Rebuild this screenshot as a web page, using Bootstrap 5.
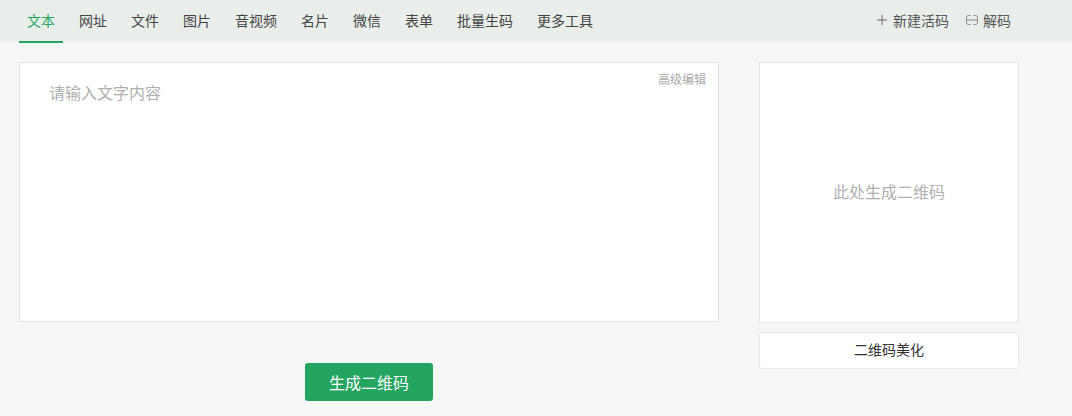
<!DOCTYPE html>
<html lang="zh">
<head>
<meta charset="utf-8">
<title>二维码</title>
<link rel="stylesheet" href="https://cdn.jsdelivr.net/npm/bootstrap@5.3.0/dist/css/bootstrap.min.css">
<style>
html,body{height:100%;overflow:hidden}
body{background:#f5f7f7;font-family:"Noto Sans CJK SC","Liberation Sans",sans-serif;color:#333}
.topbar{height:42px;background:#e9eeeb;padding:0 61px 0 19px;border-top:1px solid #eef2f0}
.tabitem{display:block;height:42px;line-height:38px;padding:0 8px;font-size:14px;color:#444;text-decoration:none;white-space:nowrap}
.tabitem.on{color:#23a55f;border-bottom:2px solid #23a55f}
.tabs{gap:8px}
.toolitem{font-size:14px;color:#555;text-decoration:none;line-height:38px;white-space:nowrap}
.tools{gap:17px}
.plusmark{margin-right:2px}
.decodemark{margin-right:1px}
.toolitem svg{display:block}
.stage{padding:20px 53px 0 19px;gap:40px}
.leftcol{width:700px}
.rightcol{width:260px}
.editor{height:260px;background:#fff;border:1px solid #e2e4e4;padding:17px 29px}
.hint{font-size:16px;line-height:24px;color:#b0b0b0}
.advanced{position:absolute;top:7px;right:12px;font-size:12px;line-height:18px;color:#aaa}
.genbtn{width:128px;height:38px;background:#23a55f;color:#fff;font-size:16px;border:0;border-radius:3px;padding:0;margin-top:41px}
.preview{height:261px;background:#fff;border:1px solid #e2e4e4;font-size:16px;color:#b0b0b0;padding-bottom:3px}
.beautify{height:37px;margin-top:9px;background:#fff;border:1px solid #e6e8e8;border-radius:3px;font-size:14px;color:#333;padding:0 0 2px}
</style>
</head>
<body>
<nav class="topbar d-flex justify-content-between align-items-start">
  <div class="tabs d-flex">
    <a class="tabitem on" href="#">文本</a>
    <a class="tabitem" href="#">网址</a>
    <a class="tabitem" href="#">文件</a>
    <a class="tabitem" href="#">图片</a>
    <a class="tabitem" href="#">音视频</a>
    <a class="tabitem" href="#">名片</a>
    <a class="tabitem" href="#">微信</a>
    <a class="tabitem" href="#">表单</a>
    <a class="tabitem" href="#">批量生码</a>
    <a class="tabitem" href="#">更多工具</a>
  </div>
  <div class="tools d-flex">
    <a class="toolitem d-flex align-items-center gap-1" href="#">
      <svg class="plusmark" width="10" height="10" viewBox="0 0 10 10" fill="none" stroke="#666" stroke-width="1"><path d="M5 0v10M0 5h10"/></svg>新建活码</a>
    <a class="toolitem d-flex align-items-center gap-1" href="#">
      <svg class="decodemark" width="12" height="10" viewBox="0 0 12 10" fill="none" stroke="#888" stroke-width="1"><path d="M4.500 0.500H2.500Q0.500 0.500 0.500 2.500v5Q0.500 9.500 2.500 9.500H4.500M7.500 0.500h2Q11.500 0.500 11.500 2.500v5Q11.500 9.500 9.500 9.500H7.500M0.500 5h11"/></svg>解码</a>
  </div>
</nav>
<main class="stage d-flex">
  <section class="leftcol d-flex flex-column align-items-center">
    <div class="editor position-relative w-100">
      <div class="hint">请输入文字内容</div>
      <span class="advanced">高级编辑</span>
    </div>
    <button class="genbtn btn" type="button">生成二维码</button>
  </section>
  <aside class="rightcol d-flex flex-column">
    <div class="preview d-flex align-items-center justify-content-center">此处生成二维码</div>
    <button class="beautify btn" type="button">二维码美化</button>
  </aside>
</main>
<script src="https://cdn.jsdelivr.net/npm/bootstrap@5.3.0/dist/js/bootstrap.bundle.min.js"></script>
</body>
</html>
